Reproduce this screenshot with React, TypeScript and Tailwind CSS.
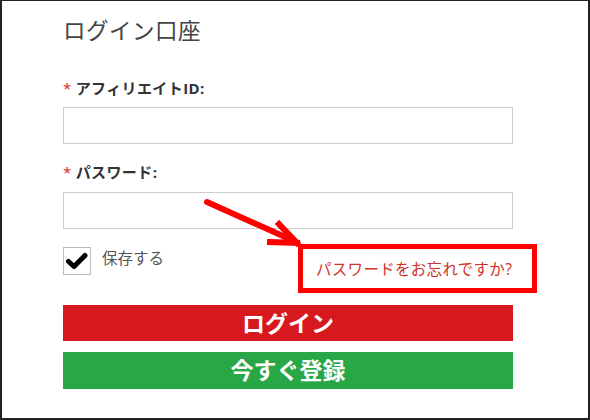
export default function App() {
  const font = { fontFamily: '"Open Sans", "Noto Sans CJK JP", sans-serif' };

  return (
    <div
      className="relative w-[590px] h-[420px] bg-white border-t border-l-2 border-r-2 border-b-2 border-[#222] pl-[61px] pt-[16px] overflow-hidden"
      style={font}
    >
      <div className="w-[450px] flex flex-col">
        <h1 className="text-[22.5px] leading-[28px] font-normal text-[#444] tracking-[0.5px]">ログイン口座</h1>

        <label className="mt-[33px] text-[15px] leading-[20px] font-bold text-[#333] tracking-[0.4px]">
          <span className="text-[#e02424] font-normal mr-[4px]">*</span>アフィリエイトID:
        </label>
        <input type="text" className="mt-[9px] h-[37px] w-[450px] border border-[#ccc] bg-white outline-none" />

        <label className="mt-[18px] text-[15px] leading-[20px] font-bold text-[#333] tracking-[0.4px]">
          <span className="text-[#e02424] font-normal mr-[4px]">*</span>パスワード:
        </label>
        <input type="password" className="mt-[10px] h-[37px] w-[450px] border border-[#ccc] bg-white outline-none" />

        <div className="mt-[18px] flex items-start gap-[11px]">
          <div className="w-[28px] h-[28px] border border-[#bbb] flex items-center justify-center">
            <svg width="24" height="24" viewBox="0 0 24 24">
              <polyline points="3.5,12.5 9,17.5 20,6.5" fill="none" stroke="#000" strokeWidth="5" strokeLinecap="round" strokeLinejoin="round" />
            </svg>
          </div>
          <span className="mt-[1px] text-[15.5px] leading-[20px] text-[#555]">保存する</span>
        </div>

        <button className="mt-[30px] h-[36px] w-[450px] bg-[#d7181f] text-white text-[23px] leading-[36px] font-bold">
          ログイン
        </button>
        <button className="mt-[11px] h-[37px] w-[450px] bg-[#29a646] text-white text-[23px] leading-[37px] font-bold">
          今すぐ登録
        </button>
      </div>

      {/* annotation arrow */}
      <svg className="absolute left-0 top-0 pointer-events-none" width="590" height="420">
        <line x1="205" y1="201" x2="292" y2="240" stroke="#ff0000" strokeWidth="6" strokeLinecap="round" />
        <line x1="277" y1="223" x2="295" y2="242" stroke="#ff0000" strokeWidth="6" strokeLinecap="square" />
        <line x1="268" y1="241" x2="295" y2="242" stroke="#ff0000" strokeWidth="6" strokeLinecap="square" />
      </svg>

      {/* annotation box */}
      <div className="absolute left-[296px] top-[243px] w-[239px] h-[49px] border-[5px] border-[#ff0000] flex items-center pl-[13px]">
        <span className="text-[15.5px] leading-[20px] text-[#d0332c] tracking-[0.3px]">パスワードをお忘れですか?</span>
      </div>
    </div>
  );
}
